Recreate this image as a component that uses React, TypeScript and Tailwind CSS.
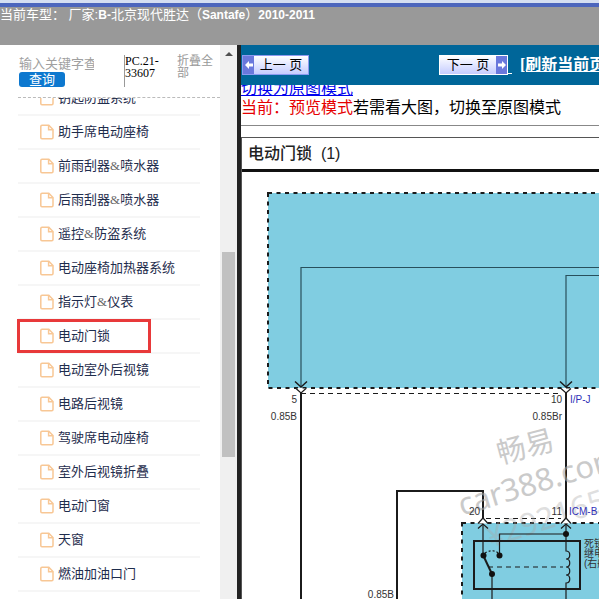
import { useState } from "react";

const MENU_ITEMS = [
  "钥匙防盗系统",
  "助手席电动座椅",
  "前雨刮器&喷水器",
  "后雨刮器&喷水器",
  "遥控&防盗系统",
  "电动座椅加热器系统",
  "指示灯&仪表",
  "电动门锁",
  "电动室外后视镜",
  "电路后视镜",
  "驾驶席电动座椅",
  "室外后视镜折叠",
  "电动门窗",
  "天窗",
  "燃油加油口门",
];

function FileIcon() {
  return (
    <svg className="h-4 w-3.5 shrink-0" viewBox="0 0 14 16" fill="none" stroke="#f8c795" strokeWidth="1.5">
      <path d="M2 1.200h6.800L13 5.600v8a1.200 1.200 0 0 1-1.200 1.200H2A1.200 1.200 0 0 1 .8 13.600V2.400A1.200 1.200 0 0 1 2 1.200Z" />
      <path d="M8.600 1.400v4.400h4.200" />
    </svg>
  );
}

function MenuRow({ label, selected, onSelect }: { label: string; selected: boolean; onSelect: () => void }) {
  // labels mix Chinese glyphs with a serif ampersand
  const parts = label.split("&");
  return (
    <li className="relative h-[34px] shrink-0 border-b-2 border-[#f6f6f6]">
      <button type="button" onClick={onSelect} className="flex h-full w-full cursor-pointer items-center gap-1 pl-[22px] text-left">
        <FileIcon />
        <span className="whitespace-nowrap text-[13px] leading-4 text-[#1f2d4d]">
          {parts[0]}
          {parts.length > 1 && <span className="font-['Liberation_Serif',serif] text-[#666]">&amp;</span>}
          {parts[1]}
        </span>
      </button>
      {selected && <span className="pointer-events-none absolute -left-px -top-px h-[34px] w-[134px] border-3 border-[#e8393a]" />}
    </li>
  );
}

function Sidebar() {
  const [selected, setSelected] = useState("电动门锁");
  return (
    <aside className="flex w-[237px] shrink-0 bg-white">
      <div className="flex min-w-0 flex-1 flex-col">
        <form className="ml-[18px] flex h-[53px] shrink-0 border-b border-dashed border-[#bbb] pt-2.5" onSubmit={(e) => e.preventDefault()}>
          <div className="w-[106px]">
            <input
              aria-label="输入关键字查询"
              placeholder="输入关键字查询"
              className="block h-[17px] w-[76px] pl-px text-[13px] leading-4 outline-none placeholder:text-[#a0a0a0]"
            />
            <button type="submit" className="ml-px block h-[15px] w-[46px] rounded-[3px] bg-[#0d78cf] text-[13px] leading-[15px] text-white">
              查询
            </button>
          </div>
          <p className="h-8 w-[53px] border-l border-[#999] font-['Liberation_Serif',serif] text-[12px] leading-3 text-black">
            PC.21-
            <br />
            33607
          </p>
          <button type="button" className="w-10 self-start text-left text-[12px] leading-3 text-[#999]">
            折叠全部
          </button>
        </form>
        <div className="min-h-0 flex-1 overflow-hidden pl-[18px]">
          <ul className="-mt-4 mr-5 flex flex-col">
            {MENU_ITEMS.map((item) => (
              <MenuRow key={item} label={item} selected={item === selected} onSelect={() => setSelected(item)} />
            ))}
          </ul>
        </div>
      </div>
      <div className="flex w-[17px] flex-col items-center bg-[#f0f0f0] pt-[7px]">
        <svg className="h-1 w-2" viewBox="0 0 8 4" fill="#505050">
          <path d="M0 4 4 0l4 4Z" />
        </svg>
        <div className="mt-49 h-[205px] w-[13px] bg-[#c1c1c1]" />
      </div>
    </aside>
  );
}

function PageArrow({ flip }: { flip?: boolean }) {
  return (
    <span className="grid h-full w-[11px] shrink-0 place-items-center bg-[#6a78dc]">
      <svg className={flip ? "h-2 w-2 rotate-180" : "h-2 w-2"} viewBox="0 0 8 8" fill="#fff">
        <path d="M0 4 4 0v2.500h4v3H4V8Z" />
      </svg>
    </span>
  );
}

function WiringDiagram() {
  return (
    <svg
      className="block h-[560px] w-[700px] max-w-none"
      viewBox="241 172 700 560"
      fill="none"
      stroke="#1b1b1b"
      fontFamily="'Liberation Sans', 'Noto Sans CJK SC', sans-serif"
      fontSize="10"
    >
      <rect x="267" y="193" width="640" height="195" fill="#80cde1" strokeWidth="2" strokeDasharray="4 4.500" />
      <rect x="461" y="523" width="460" height="260" fill="#80cde1" strokeWidth="2" strokeDasharray="4 4.500" />

      <g stroke="#28505c" strokeWidth="1.200">
        <path d="M300 387V267.500h600M565 387V275.500h340" />
      </g>
      <path d="M300 393v360M396 760V491h86v28M565 393v126" strokeWidth="2" />
      <path d="M294 381.500l6 5.500 6-5.500M559 381.500l6 5.500 6-5.500" strokeWidth="1.500" />
      <path d="M295 388.500l5 4.500 5-4.500M560 388.500l5 4.500 5-4.500" fill="#fff" strokeWidth="1.200" />
      <path d="M300 393.500h260M485 518.500h75" strokeWidth="1" strokeDasharray="5 4" />

      <g stroke="none" fill="#a8a8a8" opacity=".6" fontFamily="'Noto Sans', 'Noto Sans CJK SC', sans-serif">
        <text transform="translate(499 464) rotate(-15)" fontSize="29">畅易</text>
        <text transform="translate(461 516) rotate(-17)" fontSize="31">car388.com</text>
        <text transform="translate(489 548) rotate(-18)" fontSize="31" opacity=".6">¥292165</text>
      </g>

      <path d="M477 523.500l5-5.500 5 5.500M560 523.500l5-5.500 5 5.500" fill="#fff" strokeWidth="1.200" />
      <path d="M477 528.500l5-4.500 5 4.500M560 528.500l5-4.500 5 4.500" strokeWidth="1.200" />
      <rect x="473" y="541" width="106" height="48" strokeWidth="2" />
      <g strokeWidth="1.200">
        <path d="M482 524v31M498.500 555v-21H565M491 574v200" />
        <path d="M565 524v27c5 0 5 8 0 8 5 0 5 8 0 8 5 0 5 8 0 8 5 0 5 8 0 8v190" />
        <path d="M487 567h75" strokeDasharray="5 4" />
        <path d="M484 553c4-3 10-3 13 0" strokeDasharray="2 2" />
      </g>
      <path d="M482 555l9 19" strokeWidth="2" />
      <g stroke="none" fill="#111">
        <circle cx="565" cy="534" r="3" />
        <circle cx="482.500" cy="555.500" r="3" />
        <circle cx="498.500" cy="555.500" r="3" />
        <circle cx="491" cy="574" r="3" />
      </g>

      <g stroke="none" fill="#333">
        <text x="296" y="403" textAnchor="end">5</text>
        <text x="296" y="420" textAnchor="end">0.85B</text>
        <text x="393" y="598" textAnchor="end">0.85B</text>
        <text x="561" y="403" textAnchor="end">10</text>
        <text x="561" y="420" textAnchor="end">0.85Br</text>
        <text x="479" y="515" textAnchor="end">20</text>
        <text x="561" y="515" textAnchor="end">11</text>
        <text x="583" y="547">死锁</text>
        <text x="583" y="557">继电器</text>
        <text x="583" y="567">(右舵)</text>
      </g>
      <g stroke="none" fill="#3030b8">
        <text x="569" y="403">I/P-J</text>
        <text x="568" y="515">ICM-B</text>
      </g>
    </svg>
  );
}

function Viewer() {
  return (
    <main className="flex min-w-0 flex-1 flex-col border-l-4 border-[#222] bg-white">
      <nav className="flex h-10 shrink-0 items-center overflow-hidden bg-[#006699] pl-px">
        <button type="button" className="flex h-5 w-[67px] shrink-0 items-center border border-[#8c9af0] bg-linear-to-b from-white to-[#c5ccff]">
          <PageArrow />
          <span className="flex-1 whitespace-nowrap text-center text-[13px] leading-4 text-black">上一 页</span>
        </button>
        <a href="#next" className="ml-[130px] flex h-5 w-[69px] shrink-0 items-center border border-white bg-linear-to-b from-white to-[#c5ccff]">
          <span className="flex-1 whitespace-nowrap text-center text-[13px] leading-4 text-black">下一 页</span>
          <PageArrow flip />
        </a>
        <span className="mt-4 h-px w-1 shrink-0 bg-white" />
        <a href="#refresh" className="ml-2 whitespace-nowrap font-['Liberation_Serif','Noto_Sans_CJK_SC',serif] text-[16px] font-bold leading-5 text-white underline">
          [刷新当前页]
        </a>
      </nav>
      <div className="min-h-0 flex-1 overflow-hidden">
        <div className="-mt-1.5 whitespace-nowrap text-[16px] leading-[19px] text-black">
          <a href="#original" className="block w-fit text-[#0000ee] underline">
            切换为原图模式
          </a>
          <p>
            <span className="text-[#e60000]">当前：预览模式</span>若需看大图，切换至原图模式
          </p>
        </div>
        <hr className="mt-2 border-[#888]" />
        <section className="mt-[11px] border-t border-l border-[#555]">
          <h1 className="whitespace-pre border-b-3 border-[#111] pl-1.5 text-[16px] font-medium leading-[31px] text-[#222]">电动门锁  (1)</h1>
          <div className="overflow-hidden">
            <WiringDiagram />
          </div>
        </section>
      </div>
    </main>
  );
}

export default function App() {
  return (
    <div className="flex h-screen flex-col overflow-hidden bg-white font-['Liberation_Sans','Noto_Sans_CJK_SC',sans-serif]">
      <div className="h-[7px] shrink-0 border-b-4 border-[#4c66bd] bg-[#d5dff2]" />
      <header className="h-[38px] shrink-0 whitespace-nowrap bg-[#999] text-[13px] leading-4 text-white">
        当前车型： 厂家:<b className="text-[12px]">B-</b>北京现代胜达（<b className="text-[12px]">Santafe</b>）
        <b className="text-[12px]">2010-2011</b>
      </header>
      <div className="flex min-h-0 flex-1">
        <Sidebar />
        <Viewer />
      </div>
    </div>
  );
}
